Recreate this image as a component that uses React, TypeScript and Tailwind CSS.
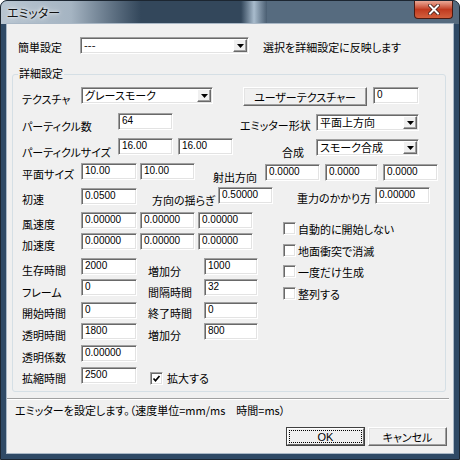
import type { ReactNode } from "react";

type P = { cls?: string; children?: ReactNode };

// static text label
function Lbl({ cls = "", children }: P) {
    return <span className={`shrink-0 whitespace-nowrap ${cls}`}>{children}</span>;
}

// sunken edit box
function Field({ cls = "", value }: { cls?: string; value: string }) {
    return (
        <div className={`h-[17px] shrink-0 bg-white border border-[#a0a0a0] border-b-white border-r-white shadow-[inset_1px_1px_0_#696969,inset_-1px_-1px_0_#e3e3e3] pl-[3px] font-['Liberation_Sans',sans-serif] text-[10px] leading-[13px] whitespace-nowrap ${cls}`}>
            {value}
        </div>
    );
}

// combo box with the little arrow button
function Combo({ cls = "", value }: { cls?: string; value: string }) {
    return (
        <div className={`h-[17px] shrink-0 flex bg-white border border-[#a0a0a0] border-b-white border-r-white shadow-[inset_1px_1px_0_#696969,inset_-1px_-1px_0_#e3e3e3] p-[1px] ${cls}`}>
            <span className="flex-1 pl-[2px] leading-[13px] whitespace-nowrap">{value}</span>
            <span className="w-[14px] flex items-center justify-center bg-[#f0f0f0] border border-white border-b-[#696969] border-r-[#696969] shadow-[inset_-1px_-1px_0_#a0a0a0]">
                <svg width="7" height="4" viewBox="0 0 7 4"><path d="M0 0h7L3.5 4z" fill="#000" /></svg>
            </span>
        </div>
    );
}

function Btn({ cls = "", children }: P) {
    return (
        <div className={`h-[19px] shrink-0 flex items-center justify-center bg-[#f0f0f0] border border-white border-b-[#696969] border-r-[#696969] shadow-[inset_-1px_-1px_0_#a0a0a0,inset_1px_1px_0_#e3e3e3] whitespace-nowrap ${cls}`}>
            {children}
        </div>
    );
}

function Check({ cls = "", checked = false }: { cls?: string; checked?: boolean }) {
    return (
        <span className={`w-[13px] h-[13px] shrink-0 flex items-center justify-center bg-white border border-[#a0a0a0] border-b-white border-r-white shadow-[inset_1px_1px_0_#696969,inset_-1px_-1px_0_#e3e3e3] ${cls}`}>
            {checked && (
                <svg width="9" height="9" viewBox="0 0 9 9">
                    <polyline points="1.5,4.5 3.5,6.8 7.5,2" fill="none" stroke="#000" strokeWidth="1.7" />
                </svg>
            )}
        </span>
    );
}

function CheckRow({ cls = "", children }: P) {
    return (
        <div className={`flex items-center h-[13px] ${cls}`}>
            <Check />
            <Lbl cls="ml-[2px]">{children}</Lbl>
        </div>
    );
}

export default function App() {
    return (
        <div className="w-[460px] h-[460px] flex flex-col rounded-t-[7px] overflow-hidden border border-[#1c2631] bg-[#2f4a66] font-['Noto_Sans_CJK_JP',sans-serif] text-[11px] leading-[12px] text-black [font-feature-settings:'palt']">
            {/* title bar */}
            <div className="h-[23px] flex shrink-0 bg-[#33475b]">
                <span className="w-[140px] pl-[6px] pt-[6px] text-[12px] leading-[12px] text-[#111] bg-linear-to-r from-[#b8c5d1] via-[#a5b4c2] to-[#33475b] [text-shadow:0_0_6px_#fff,0_0_3px_#fff]">エミッター</span>
                <div className="ml-[100px] w-[26px] bg-linear-to-r from-[#33475b] via-[#a9bccd] to-[#4a5e72]" />
                <div className="flex-1 flex justify-end bg-[#566b7f]">
                    <div className="mr-[6px] w-[39px] h-[18px] rounded-b-[4px] border border-t-0 border-[#4a1a12] bg-linear-to-b from-[#eba997] via-[#c03a1f] to-[#d25f3d] flex items-center justify-center">
                        <svg width="12" height="11" viewBox="0 0 12 11">
                            <path d="M2 1.5l8 8M10 1.5l-8 8" stroke="#3a1a14" strokeWidth="3.6" strokeLinecap="square" />
                            <path d="M2 1.5l8 8M10 1.5l-8 8" stroke="#fff" strokeWidth="2" strokeLinecap="square" />
                        </svg>
                    </div>
                </div>
            </div>

            {/* client area */}
            <div className="mx-[6px] h-[429px] bg-[#f0f0f0] shadow-[0_0_0_1px_#aab8c6] flex flex-col">
                {/* 簡単設定 */}
                <div className="mt-[13px] flex h-[17px]">
                    <Lbl cls="ml-[11px] w-[62px] pt-[4px]">簡単設定</Lbl>
                    <Combo cls="w-[169px]" value="---" />
                    <Lbl cls="ml-[14px] pt-[4px]">選択を詳細設定に反映します</Lbl>
                </div>

                {/* 詳細設定 group */}
                <div className="mt-[20px] ml-[5px] w-[434px] h-[318px] relative border border-[#d5dfe5] rounded-[3px] flex flex-col">
                    <span className="absolute left-[5px] -top-[8px] px-[1px] bg-[#f0f0f0]">詳細設定</span>

                    <div className="mt-[12px] flex h-[19px]">
                        <Lbl cls="ml-[9px] w-[59px] pt-[6px]">テクスチャ</Lbl>
                        <Combo cls="w-[132px]" value="グレースモーク" />
                        <Btn cls="ml-[30px] w-[124px]">ユーザーテクスチャー</Btn>
                        <Field cls="ml-[6px] w-[46px]" value="0" />
                    </div>

                    <div className="mt-[7px] flex h-[18px]">
                        <Lbl cls="ml-[9px] w-[96px] pt-[7px]">パーティクル数</Lbl>
                        <Field cls="w-[55px]" value="64" />
                        <Lbl cls="ml-[67px] w-[76px] pt-[6px]">エミッター形状</Lbl>
                        <Combo cls="mt-[1px] w-[103px]" value="平面上方向" />
                    </div>

                    <div className="mt-[7px] flex h-[18px]">
                        <Lbl cls="ml-[9px] w-[96px] pt-[8px]">パーティクルサイズ</Lbl>
                        <Field cls="w-[55px]" value="16.00" />
                        <Field cls="ml-[5px] w-[55px]" value="16.00" />
                        <Lbl cls="ml-[49px] w-[34px] pt-[8px]">合成</Lbl>
                        <Combo cls="mt-[1px] w-[103px]" value="スモーク合成" />
                    </div>

                    <div className="mt-[7px] flex h-[18px]">
                        <Lbl cls="ml-[9px] w-[59px] pt-[5px]">平面サイズ</Lbl>
                        <Field cls="w-[56px]" value="10.00" />
                        <Field cls="ml-[3px] w-[55px]" value="10.00" />
                        <Lbl cls="ml-[18px] w-[52px] pt-[8px]">射出方向</Lbl>
                        <Field cls="mt-[1px] w-[55px]" value="0.0000" />
                        <Field cls="mt-[1px] ml-[5px] w-[53px]" value="0.0000" />
                        <Field cls="mt-[1px] ml-[5px] w-[55px]" value="0.0000" />
                    </div>

                    <div className="mt-[6px] flex h-[18px]">
                        <Lbl cls="ml-[9px] w-[59px] pt-[6px]">初速</Lbl>
                        <Field cls="mt-[1px] w-[56px]" value="0.0500" />
                        <Lbl cls="ml-[15px] w-[66px] pt-[7px]">方向の揺らぎ</Lbl>
                        <Field cls="w-[55px]" value="0.50000" />
                        <Lbl cls="ml-[24px] w-[78px] pt-[5px]">重力のかかり方</Lbl>
                        <Field cls="w-[55px]" value="0.00000" />
                    </div>

                    {/* lower part: values on the left, flags on the right */}
                    <div className="mt-[7px] flex">
                        <div className="flex flex-col">
                            <div className="flex h-[17px]">
                                <Lbl cls="ml-[9px] w-[59px] pt-[6px]">風速度</Lbl>
                                <Field cls="w-[56px]" value="0.00000" />
                                <Field cls="ml-[3px] w-[55px]" value="0.00000" />
                                <Field cls="ml-[3px] w-[55px]" value="0.00000" />
                            </div>
                            <div className="mt-[4px] flex h-[17px]">
                                <Lbl cls="ml-[9px] w-[59px] pt-[6px]">加速度</Lbl>
                                <Field cls="w-[56px]" value="0.00000" />
                                <Field cls="ml-[3px] w-[55px]" value="0.00000" />
                                <Field cls="ml-[3px] w-[55px]" value="0.00000" />
                            </div>
                            <div className="mt-[8px] flex h-[17px]">
                                <Lbl cls="ml-[9px] w-[59px] pt-[6px]">生存時間</Lbl>
                                <Field cls="w-[56px]" value="2000" />
                                <Lbl cls="ml-[11px] w-[56px] pt-[7px]">増加分</Lbl>
                                <Field cls="w-[54px]" value="1000" />
                            </div>
                            <div className="mt-[4px] flex h-[17px]">
                                <Lbl cls="ml-[9px] w-[59px] pt-[7px]">フレーム</Lbl>
                                <Field cls="w-[56px]" value="0" />
                                <Lbl cls="ml-[11px] w-[56px] pt-[7px]">間隔時間</Lbl>
                                <Field cls="w-[54px]" value="32" />
                            </div>
                            <div className="mt-[6px] flex h-[17px]">
                                <Lbl cls="ml-[9px] w-[59px] pt-[5px]">開始時間</Lbl>
                                <Field cls="w-[56px]" value="0" />
                                <Lbl cls="ml-[11px] w-[56px] pt-[5px]">終了時間</Lbl>
                                <Field cls="w-[54px]" value="0" />
                            </div>
                            <div className="mt-[4px] flex h-[17px]">
                                <Lbl cls="ml-[9px] w-[59px] pt-[6px]">透明時間</Lbl>
                                <Field cls="w-[56px]" value="1800" />
                                <Lbl cls="ml-[11px] w-[56px] pt-[6px]">増加分</Lbl>
                                <Field cls="w-[54px]" value="800" />
                            </div>
                            <div className="mt-[5px] flex h-[17px]">
                                <Lbl cls="ml-[9px] w-[59px] pt-[6px]">透明係数</Lbl>
                                <Field cls="w-[56px]" value="0.00000" />
                            </div>
                            <div className="mt-[5px] flex h-[17px]">
                                <Lbl cls="ml-[9px] w-[59px] pt-[5px]">拡縮時間</Lbl>
                                <Field cls="w-[56px]" value="2500" />
                                <Check cls="ml-[13px] mt-[5px]" checked />
                                <Lbl cls="ml-[4px] pt-[5px]">拡大する</Lbl>
                            </div>
                        </div>

                        <div className="ml-[25px] flex flex-col">
                            <CheckRow cls="mt-[10px]">自動的に開始しない</CheckRow>
                            <CheckRow cls="mt-[9px]">地面衝突で消滅</CheckRow>
                            <CheckRow cls="mt-[8px]">一度だけ生成</CheckRow>
                            <CheckRow cls="mt-[9px]">整列する</CheckRow>
                        </div>
                    </div>
                </div>

                {/* separator + status */}
                <div className="mt-[6px] w-[442px] h-[2px] border-t border-[#a0a0a0] border-b border-b-white" />
                <span className="mt-[4px] ml-[8px] whitespace-nowrap">エミッターを設定します。（速度単位=mm/ms　時間=ms）</span>

                <div className="mt-[11px] flex justify-end mr-[6px] gap-[3px]">
                    <div className="w-[79px] h-[19px] border border-[#404040] flex">
                        <div className="flex-1 flex bg-[#f0f0f0] border border-white border-b-[#696969] border-r-[#696969] p-[1px]">
                            <div className="flex-1 flex items-center justify-center border border-dotted border-black font-['Liberation_Sans',sans-serif]">OK</div>
                        </div>
                    </div>
                    <Btn cls="w-[79px]">キャンセル</Btn>
                </div>
            </div>
        </div>
    );
}
